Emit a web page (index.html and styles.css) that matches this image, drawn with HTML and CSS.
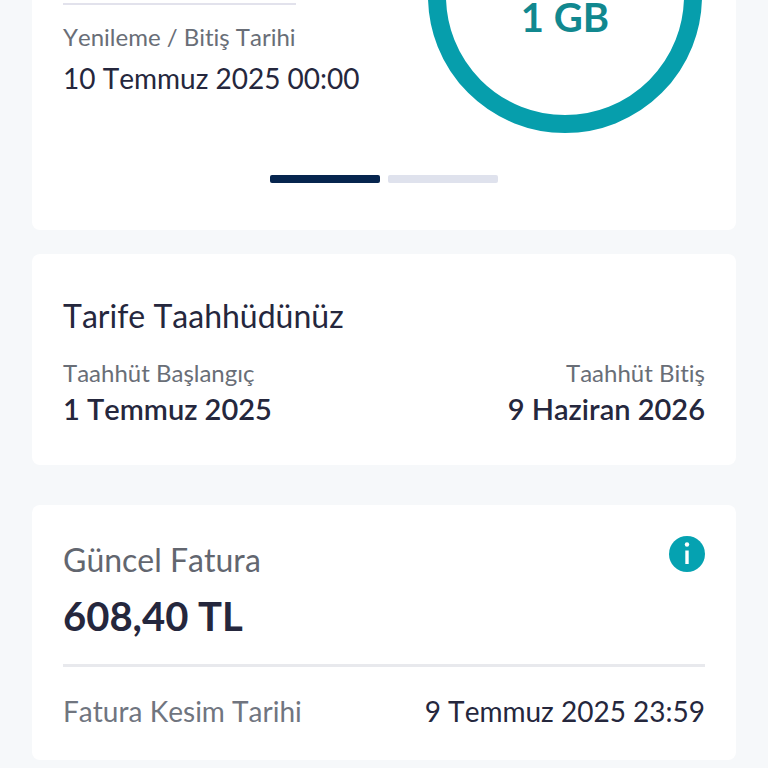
FILE: index.html
```
<!DOCTYPE html>
<html lang="tr">
  <head>
    <meta charset="utf-8">
    <meta name="viewport" content="width=device-width, initial-scale=1">
    <title>Tarifem</title>
    <link rel="stylesheet" href="styles.css">
  </head>
  <body>
    <main class="page">
      <section class="card card-usage">
        <div class="usage">
          <div class="renewal">
            <p class="label">Yenileme / Bitiş Tarihi</p>
            <p class="value">10 Temmuz 2025 00:00</p>
          </div>
          <div class="ring">
            <span class="ring-total">1 GB</span>
          </div>
        </div>
        <div class="pager">
          <span class="pager-bar pager-bar-active"></span>
          <span class="pager-bar"></span>
        </div>
      </section>

      <section class="card card-commitment">
        <h2 class="title">Tarife Taahhüdünüz</h2>
        <div class="row">
          <div>
            <p class="label">Taahhüt Başlangıç</p>
            <p class="value value-strong">1 Temmuz 2025</p>
          </div>
          <div class="right">
            <p class="label">Taahhüt Bitiş</p>
            <p class="value value-strong">9 Haziran 2026</p>
          </div>
        </div>
      </section>

      <section class="card card-bill">
        <div class="row">
          <h2 class="title title-muted">Güncel Fatura</h2>
          <button class="info" type="button" aria-label="Bilgi">
            <svg viewBox="0 0 36 36" width="36" height="36">
              <circle cx="18" cy="18" r="18" fill="#05a2b1"/>
              <circle cx="18" cy="8.500" r="2.200" fill="#fff"/>
              <path d="M18 14.500v13.500" stroke="#fff" stroke-width="3.400"/>
            </svg>
          </button>
        </div>
        <p class="amount">608,40 TL</p>
        <div class="row bill-date">
          <p class="value value-muted">Fatura Kesim Tarihi</p>
          <p class="value">9 Temmuz 2025 23:59</p>
        </div>
      </section>
    </main>
  </body>
</html>
```
FILE: styles.css
```
* {
  box-sizing: border-box;
}
body {
  margin: 0;
  background: #f6f8fa;
  color: #25273d;
  font-family: Lato, "Open Sans", sans-serif;
  font-kerning: none;
  font-variant-ligatures: none;
}
h2, p {
  margin: 0;
  font-weight: 400;
}
/* the page is scrolled part of the way down the usage card */
.page {
  margin-top: -141px;
  padding: 0 32px 8px;
}
.card {
  padding: 0 31px;
  border-radius: 8px;
  background: #fff;
}
.row {
  display: flex;
  justify-content: space-between;
}
.right {
  text-align: right;
}
.label {
  color: #696e77;
  font-size: 24px;
  line-height: 32px;
}
.value {
  font-size: 28px;
  line-height: 40px;
}
.value-strong {
  font-size: 29px;
  font-weight: 600;
}
.value-muted {
  color: #70757f;
}
.title {
  font-size: 32px;
  line-height: 40px;
}
.title-muted {
  color: #62666f;
}

/* usage */
.card-usage {
  padding-bottom: 47px;
}
.usage {
  display: flex;
  justify-content: space-between;
  align-items: flex-end;
  padding-right: 3px;
}
.renewal {
  padding-bottom: 35px;
}
.renewal .label {
  width: fit-content;
  margin-bottom: 5px;
  padding-top: 16px;
  border-top: 2px solid #e2e2ec;
}
.ring {
  display: flex;
  align-items: center;
  justify-content: center;
  width: 274px;
  height: 274px;
  padding-top: 42px;
  border: 18px solid #069eac;
  border-radius: 50%;
}
.ring-total {
  color: #11888f;
  font-size: 40px;
  font-weight: 700;
  line-height: 32px;
}
.pager {
  display: flex;
  justify-content: center;
  gap: 8px;
  padding-top: 42px;
}
.pager-bar {
  width: 110px;
  height: 8px;
  border-radius: 2px;
  background: #dfe2ed;
}
.pager-bar-active {
  background: #06254e;
}

/* commitment */
.card-commitment {
  margin-top: 24px;
  padding-top: 42px;
  padding-bottom: 36px;
}
.card-commitment .title {
  margin-bottom: 21px;
}

/* bill */
.card-bill {
  margin-top: 40px;
  padding-top: 31px;
  padding-bottom: 29px;
}
.card-bill .title {
  margin-top: 4px;
}
.info {
  width: 36px;
  height: 36px;
  padding: 0;
  border: 0;
  background: none;
  cursor: pointer;
}
.info svg {
  display: block;
}
.amount {
  margin-top: 12px;
  font-size: 40px;
  font-weight: 700;
  line-height: 48px;
}
.bill-date {
  margin-top: 24px;
  padding-top: 24px;
  border-top: 3px solid #e8e9ed;
}
```
